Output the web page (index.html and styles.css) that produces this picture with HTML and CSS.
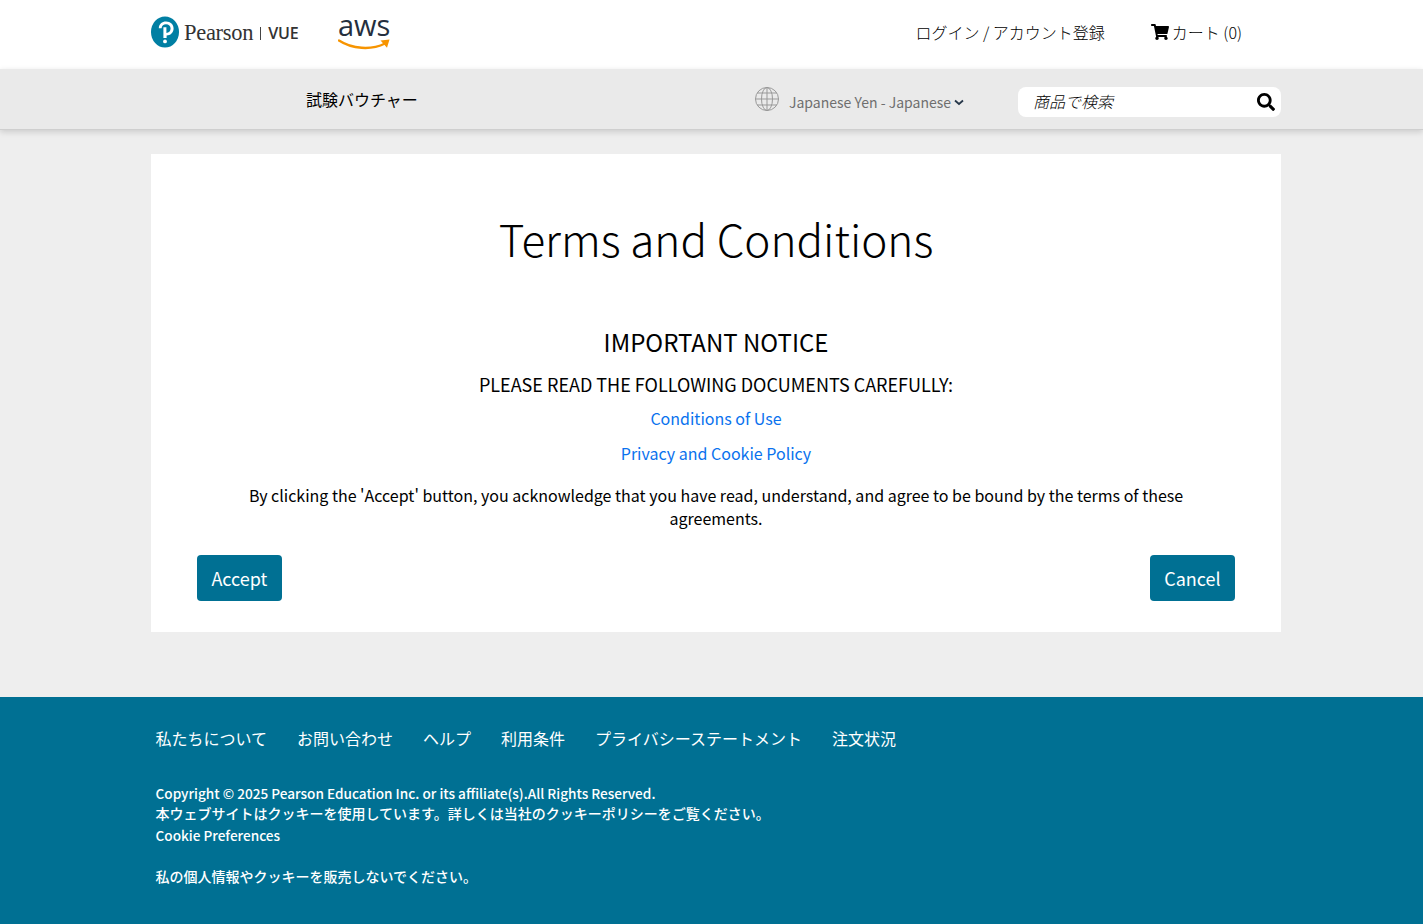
FILE: index.html
```html
<!DOCTYPE html>
<html lang="ja">
<head>
    <title>Terms and Conditions</title>
    <meta name="viewport" content="width=device-width, initial-scale=1.0">
    <link rel="stylesheet" href="styles.css">
</head>
<body>
    <!-- Top header -->
    <header class="top-bar">
        <div class="wrap top-inner">
            <div class="logos">
                <a class="pearson-logo" href="#">
                    <svg class="pearson-mark" width="28" height="32" viewBox="0 0 28 32">
                        <ellipse cx="14" cy="16" rx="14" ry="15.5" fill="#007fa3"/>
                        <path d="M7.8 12.2 C8 8 11 5.6 15 5.6 C19.6 5.6 22.6 8.6 22.6 12.6 C22.6 16.8 19.4 19.6 15.6 19.6 L15.6 22 L12.4 22 L12.4 11.2 L15.4 11.2 L15.4 16.9 C17.8 16.9 19.6 15.2 19.6 12.6 C19.6 10 17.8 8.3 15 8.3 C12.6 8.3 10.8 9.8 10.6 12.2 Z" fill="#fff"/>
                        <circle cx="14" cy="25.4" r="1.9" fill="#fff"/>
                    </svg>
                    <span class="pearson-name">Pearson</span>
                    <span class="pearson-sep"></span>
                    <span class="pearson-vue">VUE</span>
                </a>
                <a class="aws-logo" href="#">
                    <span class="aws-text">aws</span>
                    <svg class="aws-smile" width="53" height="13" viewBox="0 0 53 13">
                        <path d="M1 2.5 C14 11 33 12.5 47 5.5" fill="none" stroke="#f79400" stroke-width="2.4" stroke-linecap="round"/>
                        <path d="M42.5 2.6 L51.5 1.4 L49 9.8 Z" fill="#f79400"/>
                    </svg>
                </a>
            </div>
            <div class="account-links">
                <a class="account-link" href="#">ログイン / アカウント登録</a>
                <a class="cart-link" href="#">
                    <svg width="18" height="16" viewBox="0 0 576 512"><path d="M528 301l47-208c3-15-8-29-23-29H159l-9-47C148 7 138 0 127 0H24C11 0 0 11 0 24v16c0 13 11 24 24 24h70l70 343c-17 10-28 28-28 49 0 31 25 56 56 56s56-25 56-56c0-16-6-30-17-40h209c-11 10-17 24-17 40 0 31 25 56 56 56s56-25 56-56c0-22-13-41-31-50l6-25c3-15-8-29-23-29H214l-7-32h298c11 0 21-8 23-19z"/></svg>
                    カート (0)
                </a>
            </div>
        </div>
    </header>

    <!-- Sub navigation -->
    <nav class="sub-bar">
        <div class="wrap sub-inner">
            <a class="voucher-link" href="#">試験バウチャー</a>
            <div class="locale">
                <svg width="24" height="24" viewBox="0 0 24 24" fill="none" stroke="#999" stroke-width="1">
                    <circle cx="12" cy="12" r="11.5"/>
                    <ellipse cx="12" cy="12" rx="5.5" ry="11.5"/>
                    <path d="M12 .5v23M.5 12h23M2.2 6h19.6M2.2 18h19.6"/>
                </svg>
                <span class="locale-name">Japanese Yen - Japanese</span>
                <svg class="chevron" width="10" height="7" viewBox="0 0 10 7"><path d="M1 1.5l4 3.5 4-3.5" fill="none" stroke="#27384a" stroke-width="1.8"/></svg>
            </div>
            <form class="search-box">
                <input class="search-input" type="text" placeholder="商品で検索">
                <svg width="18" height="18" viewBox="0 0 512 512"><path d="M505 443L405 343c-4-4-10-7-17-7h-16c28-35 44-80 44-128C416 93 323 0 208 0S0 93 0 208s93 208 208 208c48 0 93-16 128-44v16c0 7 3 13 7 17l100 100c9 9 24 9 34 0l28-28c9-10 9-25 0-34zM208 336c-71 0-128-57-128-128S137 80 208 80s128 57 128 128-57 128-128 128z"/></svg>
            </form>
        </div>
    </nav>

    <!-- Terms card -->
    <main class="wrap">
        <section class="card">
            <h1 class="card-title">Terms and Conditions</h1>
            <h2 class="notice-title">IMPORTANT NOTICE</h2>
            <h3 class="notice-sub">PLEASE READ THE FOLLOWING DOCUMENTS CAREFULLY:</h3>
            <p class="doc-link"><a href="#">Conditions of Use</a></p>
            <p class="doc-link"><a href="#">Privacy and Cookie Policy</a></p>
            <p class="notice-text">By clicking the 'Accept' button, you acknowledge that you have read, understand, and agree to be bound by the terms of these agreements.</p>
            <div class="card-actions">
                <button class="btn">Accept</button>
                <button class="btn">Cancel</button>
            </div>
        </section>
    </main>

    <!-- Footer -->
    <footer class="site-footer">
        <div class="wrap">
            <ul class="footer-nav">
                <li><a href="#">私たちについて</a></li>
                <li><a href="#">お問い合わせ</a></li>
                <li><a href="#">ヘルプ</a></li>
                <li><a href="#">利用条件</a></li>
                <li><a href="#">プライバシーステートメント</a></li>
                <li><a href="#">注文状況</a></li>
            </ul>
            <div class="footer-legal">
                <p class="legal-latin">Copyright © 2025 Pearson Education Inc. or its affiliate(s).All Rights Reserved.</p>
                <p>本ウェブサイトはクッキーを使用しています。詳しくは当社のクッキーポリシーをご覧ください。</p>
                <p class="legal-latin">Cookie Preferences</p>
                <p class="legal-gap">私の個人情報やクッキーを販売しないでください。</p>
            </div>
        </div>
    </footer>
</body>
</html>
```

FILE: styles.css
```css
* {
    box-sizing: border-box;
}

body {
    margin: 0;
    background-color: #eeeeee;
    color: #000;
    font-family: "Noto Sans CJK JP", "Noto Sans", sans-serif;
    font-size: 16px;
}

a {
    color: inherit;
    text-decoration: none;
}

.wrap {
    width: 1130px;
    margin-left: 151px;
}

/* Top header */
.top-bar {
    height: 69px;
    background-color: #fff;
}

.top-inner {
    display: flex;
    justify-content: space-between;
    height: 100%;
}

.logos {
    display: flex;
    align-items: flex-start;
    gap: 39px;
}

.pearson-logo {
    display: flex;
    align-items: center;
    width: 148px;
    height: 32px;
    margin-top: 16px;
    color: #333;
}

.pearson-mark {
    flex: none;
    margin-right: 5px;
}

.pearson-name {
    margin-top: 2px;
    font-family: "Liberation Serif", serif;
    font-size: 22.5px;
    letter-spacing: -0.3px;
}

.pearson-sep {
    flex: none;
    width: 1px;
    height: 13px;
    margin: 2px 7px 0 7px;
    background-color: #444;
}

.pearson-vue {
    margin-top: 1px;
    font-family: "Open Sans", sans-serif;
    font-size: 16px;
    font-weight: 600;
    letter-spacing: -0.1px;
}

.aws-logo {
    display: flex;
    flex-direction: column;
    width: 53px;
    margin-top: 11px;
}

.aws-text {
    height: 27px;
    padding-right: 2px;
    color: #252f3e;
    font-family: "Open Sans", sans-serif;
    font-size: 29px;
    line-height: 27px;
    text-align: center;
}

.aws-smile {
    display: block;
}

.account-links {
    display: flex;
    align-items: center;
    padding-right: 39px;
    gap: 46px;
    font-weight: 300;
    height: 64px;
}

.cart-link {
    display: flex;
    align-items: center;
    gap: 3px;
}

/* Sub navigation */
.sub-bar {
    height: 61px;
    background-color: #eaeaea;
    border-bottom: 1px solid #cfcfcf;
    box-shadow: 0 2px 6px rgba(0, 0, 0, 0.15);
}

.sub-inner {
    display: flex;
    align-items: center;
    height: 100%;
}

.voucher-link {
    width: 449px;
    margin-left: 155px;
    white-space: nowrap;
}

.locale {
    display: flex;
    align-items: center;
    width: 263px;
    color: #6f6f6f;
    font-size: 14px;
}

.locale-name {
    margin: 6px 3px 0 10px;
}

.chevron {
    margin-top: 6px;
}

.search-box {
    display: flex;
    align-items: center;
    width: 263px;
    height: 30px;
    padding: 0 6px 0 15px;
    border-radius: 8px;
    background-color: #fff;
    margin-top: 6px;
}

.search-input {
    flex: 1;
    min-width: 0;
    height: 28px;
    margin-bottom: 2px;
    padding: 0;
    border: 0;
    outline: 0;
    background: none;
    color: #000;
    font-family: inherit;
    font-size: 16px;
    font-style: italic;
    font-weight: 300;
}

.search-input::placeholder {
    color: #000;
    opacity: 1;
}

/* Terms card */
.card {
    height: 478px;
    margin-top: 24px;
    padding: 53px 46px 0;
    background-color: #fff;
    text-align: center;
}

.card-title {
    margin: 0 0 55px;
    font-size: 44px;
    font-weight: 300;
    line-height: 62px;
}

.notice-title {
    margin: 0 0 11px;
    font-size: 24px;
    font-weight: 400;
    line-height: 36px;
}

.notice-sub {
    margin: 0 0 8px;
    font-size: 18px;
    font-weight: 400;
    line-height: 26px;
}

.doc-link {
    margin: 0 0 9px;
    color: #0a72ee;
    font-size: 16px;
    line-height: 26px;
}

.notice-text {
    max-width: 960px;
    margin: 18px auto 0;
    font-size: 16px;
    line-height: 23px;
}

.card-actions {
    display: flex;
    justify-content: space-between;
    margin-top: 25px;
}

.btn {
    height: 46px;
    padding: 0 14.4px;
    border: 0;
    border-radius: 4px;
    background-color: #007093;
    color: #fff;
    font-family: inherit;
    font-size: 18px;
    font-weight: 400;
}

/* Footer */
.site-footer {
    height: 227px;
    margin-top: 65px;
    padding: 28px 0 0 4.5px;
    background-color: #007093;
    color: #fff;
}

.footer-nav {
    display: flex;
    gap: 30px;
    margin: 0;
    padding: 0;
    list-style: none;
    font-size: 16px;
    font-weight: 400;
    line-height: 26px;
}

.footer-legal {
    margin-top: 31px;
    font-size: 14px;
    font-weight: 500;
    line-height: 21px;
}

.footer-legal p {
    margin: 0;
}

.footer-legal .legal-latin {
    padding-top: 1px;
    font-size: 13.6px;
    line-height: 20px;
}

.footer-legal .legal-gap {
    margin-top: 21px;
}
```
